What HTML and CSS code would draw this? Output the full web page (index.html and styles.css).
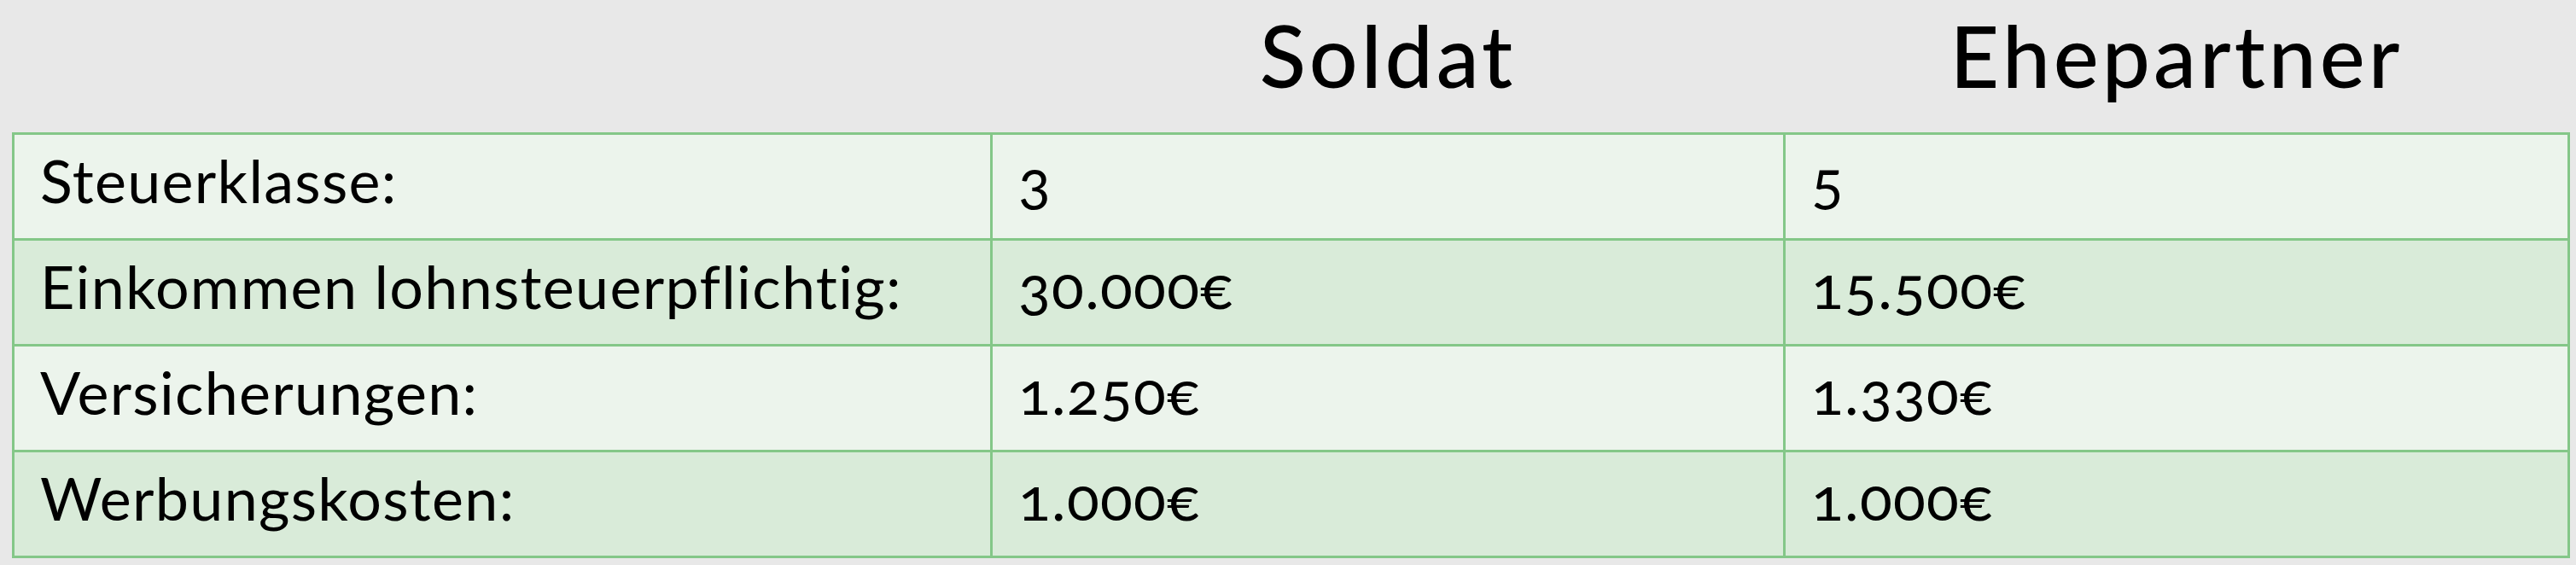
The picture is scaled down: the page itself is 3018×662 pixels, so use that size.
FILE: index.html
```html
<!DOCTYPE html>
<html lang="de">
<head>
<meta charset="utf-8">
<title>Steuervergleich</title>
<link rel="stylesheet" href="styles.css">
</head>
<body>
<div class="page">
  <table class="tax">
    <colgroup>
      <col class="c-label">
      <col class="c-a">
      <col class="c-b">
    </colgroup>
    <thead>
      <tr>
        <th></th>
        <th>Soldat</th>
        <th>Ehepartner</th>
      </tr>
    </thead>
    <tbody>
      <tr class="light">
        <td>Steuerklasse:</td>
        <td>3</td>
        <td>5</td>
      </tr>
      <tr class="dark">
        <td>Einkommen lohnsteuerpflichtig:</td>
        <td>30.000€</td>
        <td>15.500€</td>
      </tr>
      <tr class="light">
        <td>Versicherungen:</td>
        <td>1.250€</td>
        <td>1.330€</td>
      </tr>
      <tr class="dark">
        <td>Werbungskosten:</td>
        <td>1.000€</td>
        <td>1.000€</td>
      </tr>
    </tbody>
  </table>
</div>
</body>
</html>
```

FILE: styles.css
```css
html, body {
  margin: 0;
  padding: 0;
  background: #e8e8e8;
}

.page {
  padding: 0 10px 0 14px;
  font-family: Lato, "Liberation Sans", sans-serif;
  color: #000;
}

.tax {
  width: 2994px;
  border-collapse: collapse;
  table-layout: fixed;
  font-variant-numeric: oldstyle-nums;
}

.c-label { width: 1146px; }
.c-a { width: 929px; }
.c-b { width: 919px; }

.tax th {
  height: 156px;
  padding: 14px 0 0;
  vertical-align: top;
  font-size: 100px;
  line-height: 1;
  font-weight: 500;
  letter-spacing: 4px;
  text-align: center;
  box-sizing: border-box;
}

.tax td {
  border: 3px solid #84c788;
  padding: 18px 30px 33px;
  vertical-align: top;
  font-size: 70px;
  line-height: 1;
  letter-spacing: 1.3px;
  text-align: left;
  white-space: nowrap;
}

.light td { background: #ecf4ec; }
.dark td { background: #d9ebd9; }
```
